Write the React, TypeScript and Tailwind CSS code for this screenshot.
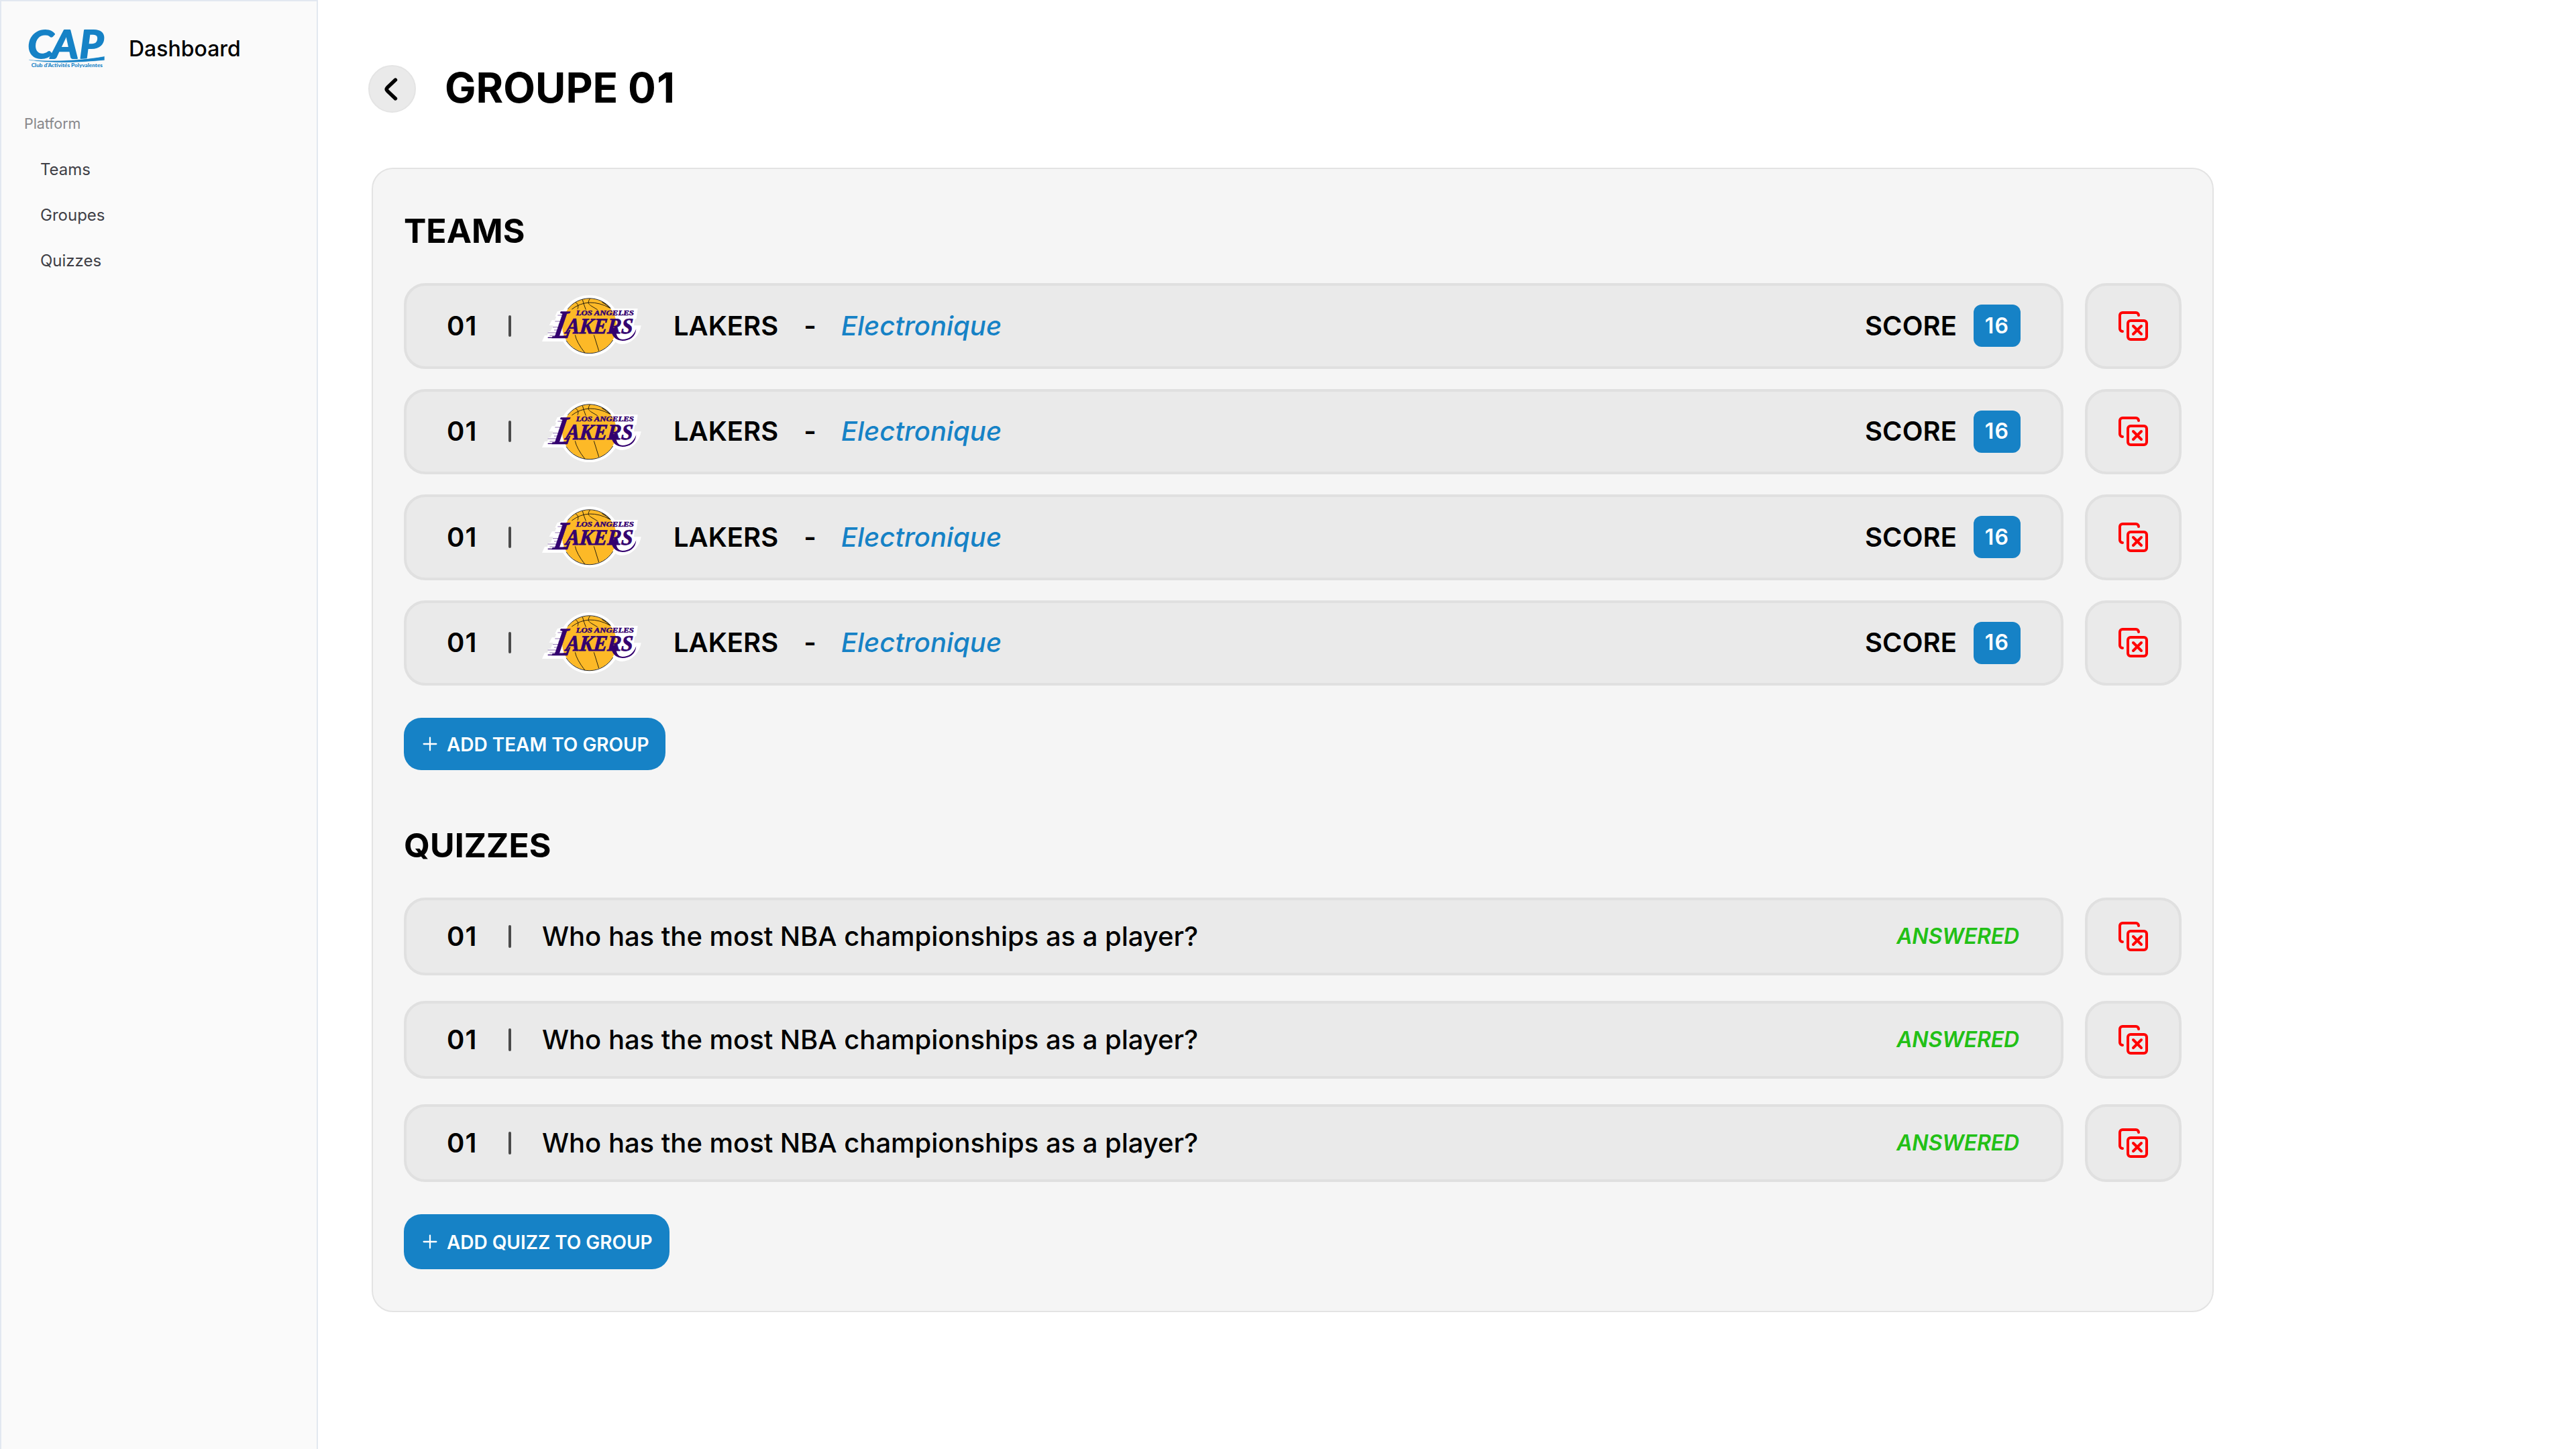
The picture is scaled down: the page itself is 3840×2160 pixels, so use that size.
import { CopyX, Plus } from "lucide-react";

const NAV_ITEMS = ["Teams", "Groupes", "Quizzes"];

const TEAMS = Array.from({ length: 4 }, (_, i) => ({
  id: i,
  rank: "01",
  name: "LAKERS",
  department: "Electronique",
  score: "16",
}));

const QUIZZES = Array.from({ length: 3 }, (_, i) => ({
  id: i,
  rank: "01",
  question: "Who has the most NBA championships as a player?",
  status: "ANSWERED",
}));

function CapLogo() {
  return (
    <svg viewBox="0 0 420 240" className="h-20 w-[140px] shrink-0" fill="#1682c6">
      <text
        transform="translate(34 171) scale(1.07 1)"
        x="0 99 216"
        y={0}
        fontFamily="Lato, sans-serif"
        fontStyle="italic"
        fontWeight={700}
        fontSize={174}
        stroke="#1682c6"
        strokeWidth={6}
        strokeLinejoin="round"
      >
        CAP
      </text>
      {/* swoosh under the wordmark */}
      <path d="M39 176 C120 184 250 184 378 161 V180 C260 192 130 194 39 179 Z" stroke="#fafafa" strokeWidth={2} />
      <text x={50} y={211} fontFamily="Lato, sans-serif" fontWeight={900} fontSize={23} textLength={319} lengthAdjust="spacingAndGlyphs">
        Club d'Activités Polyvalentes
      </text>
    </svg>
  );
}

function LakersLogo() {
  return (
    <svg viewBox="54 60 444 273" className="h-[91px] w-[148px] shrink-0">
      {/* sticker outline */}
      <g fill="#fff">
        <circle cx={266} cy={197} r={137} />
        <path d="M54 267 L66 240 L78 240 L83 222 L92 222 L104 195 L86 195 L98 172 L112 172 L118 155 L112 155 L122 133 L170 120 H482 L476 165 L468 169 L465 196 H497 C490 240 455 280 408 279 C392 278 382 270 372 262 L150 267 Z" />
      </g>
      {/* ball */}
      <circle cx={266} cy={197} r={122} fill="#fdb927" />
      <g fill="none" stroke="#0b0b0b" strokeWidth={2.6}>
        <path d="M169 122 A123 123 0 0 1 361 119" />
        <path d="M162 263 A123 123 0 0 0 371 261" />
        <path d="M187 123 Q262 66 359 118" />
        <path d="M204 92 C218 102 217 112 213 122" />
        <path d="M235 80 C239 96 244 110 250 125" />
        <path d="M268 76 C258 92 260 98 272 107 L302 125" />
        <path d="M202 238 Q208 270 246 319" />
        <path d="M286 238 L308 309" />
        <path d="M322 91 Q342 101 358 118" strokeWidth={3} />
      </g>
      <g fill="#33006f" stroke="#33006f" fontFamily="'Liberation Serif', serif" fontWeight={700} fontStyle="italic">
        <text x={206} y={151} fontSize={29} textLength={259} lengthAdjust="spacingAndGlyphs" strokeWidth={1.4}>
          LOS ANGELES
        </text>
        <text transform="translate(99 251) skewX(-12)" fontSize={181} textLength={80} lengthAdjust="spacingAndGlyphs" strokeWidth={2}>
          L
        </text>
        <text transform="translate(158 231) skewX(-5)" fontSize={99} textLength={300} lengthAdjust="spacingAndGlyphs" strokeWidth={2.5}>
          AKERS
        </text>
      </g>
      {/* tail sweeping from the R */}
      <path fill="#33006f" d="M358 205 L384 208 C384 240 392 257 414 258 C440 258 462 246 475 211 C473 246 446 264 414 264 C386 263 368 246 366 226 Z" />
      {/* speed lines */}
      <g stroke="#33006f" strokeWidth={2} opacity={0.8}>
        <path d="M135 136 H162 M124 150 H150 M142 160 H156 M112 177 H144 M128 190 H142 M102 203 H130 M108 216 H128 M80 228 H122 M88 240 H116" />
      </g>
      <path d="M80 248 H150 V252 H80 Z" fill="#33006f" />
    </svg>
  );
}

function DeleteButton() {
  return (
    <button className="flex w-36 shrink-0 items-center justify-center rounded-[32px] border-4 border-[#e0e0e0] bg-[#eaeaea] text-[#ff0000]">
      <CopyX size={48} strokeWidth={2} />
    </button>
  );
}

function Rank({ value }: { value: string }) {
  return <span className="w-[46px] font-semibold tracking-[1px]">{value}</span>;
}

function AddButton({ label, className }: { label: string; className: string }) {
  return (
    <button className={`flex items-center self-start rounded-[26px] bg-[#1682c6] pl-[23px] text-[28px] leading-none font-semibold text-white ${className}`}>
      <Plus size={32} strokeWidth={1.7} />
      <span className="ml-[9px] pt-[2px] tracking-[-0.03px] whitespace-nowrap">{label}</span>
    </button>
  );
}

function Sidebar() {
  return (
    <aside className="h-[2160px] w-[474px] shrink-0 border-2 border-b-0 border-[#e2e8f0] bg-[#fafafa]">
      <div className="flex h-[110px] items-start pt-7 pl-7">
        <CapLogo />
        <span className="ml-[22px] text-[32px] leading-[84px] font-medium text-black">
          <span className="block pt-px">Dashboard</span>
        </span>
      </div>
      <div className="mt-[56px] pl-[34px] text-[21.5px] leading-8 tracking-[-0.1px] text-[#88888b]">Platform</div>
      <nav className="mt-[19px] flex flex-col pl-[58px] text-2xl text-[#3f3f46]">
        {NAV_ITEMS.map((item) => (
          <a key={item} className="leading-[68px]">{item}</a>
        ))}
      </nav>
    </aside>
  );
}

export default function App() {
  return (
    <div className="flex h-[2160px] w-[3840px] overflow-hidden bg-white font-['Inter',sans-serif] text-black">
      <Sidebar />

      <main className="flex flex-col pt-[97px] pl-[75px]">
        <header className="flex h-[71px] items-center">
          <button className="flex size-[71px] items-center justify-center rounded-full border-2 border-[#e4e4e4] bg-[#eaeaea]">
            <svg viewBox="0 0 24 36" className="mr-[4px] h-9 w-6" fill="none" stroke="#000" strokeWidth={5.4} strokeLinecap="round" strokeLinejoin="round">
              <path d="M18.5 4 L6.4 15.5 Q4 18 6.4 20.5 L18.5 32" />
            </svg>
          </button>
          <h1 className="mb-[3px] ml-[43px] text-[62px] leading-none font-bold whitespace-pre">
            GROUPE <span className="tracking-[1.6px]">01</span>
          </h1>
        </header>

        <section className="mt-[82px] ml-[5px] flex h-[1706px] w-[2746px] flex-col rounded-[32px] border-2 border-[#e3e3e3] bg-[#f5f5f5] px-[46px] pt-[62px]">
          <h2 className="text-[50px] leading-[60px] font-bold">TEAMS</h2>
          <div className="mt-12 flex flex-col gap-[30px]">
            {TEAMS.map((team) => (
              <div key={team.id} className="flex h-[127.5px] gap-8">
                <div className="flex flex-1 items-center rounded-[32px] border-4 border-[#e0e0e0] bg-[#eaeaea] px-[60px] text-[40px] leading-none">
                  <Rank value={team.rank} />
                  <span className="ml-[46px] h-8 w-1 rounded-full bg-[#4b4b4b]" />
                  <span className="ml-[46px]">
                    <LakersLogo />
                  </span>
                  <span className="ml-[48px] font-semibold">{team.name}</span>
                  <span className="ml-[38px] font-semibold">-</span>
                  <span className="ml-[37px] font-medium text-[#1682c6] italic">{team.department}</span>
                  <span className="ml-auto font-semibold tracking-[0.1px]">SCORE</span>
                  <span className="ml-[25px] flex h-[63px] w-[70px] items-center justify-center rounded-xl bg-[#1682c6] text-[32px] font-semibold tracking-[1.2px] text-white">
                    {team.score}
                  </span>
                </div>
                <DeleteButton />
              </div>
            ))}
          </div>
          <AddButton label="ADD TEAM TO GROUP" className="mt-12 h-[78px] w-[390px]" />

          <h2 className="mt-[82px] text-[50px] leading-[60px] font-bold tracking-[0.1px]">QUIZZES</h2>
          <div className="mt-12 flex flex-col gap-[38px]">
            {QUIZZES.map((quiz) => (
              <div key={quiz.id} className="flex h-[116px] gap-8">
                <div className="flex flex-1 items-center rounded-[32px] border-4 border-[#e0e0e0] bg-[#eaeaea] px-[60px] text-[40px] leading-none">
                  <Rank value={quiz.rank} />
                  <span className="ml-[46px] h-[34px] w-1 rounded-full bg-[#4b4b4b]" />
                  <span className="ml-[46px] font-medium tracking-[-0.03px]">{quiz.question}</span>
                  <span className="mr-[2px] ml-auto text-[32px] font-semibold tracking-[-0.15px] text-[#22c016] italic">{quiz.status}</span>
                </div>
                <DeleteButton />
              </div>
            ))}
          </div>
          <AddButton label="ADD QUIZZ TO GROUP" className="mt-12 h-[82px] w-[396px]" />
        </section>
      </main>
    </div>
  );
}
